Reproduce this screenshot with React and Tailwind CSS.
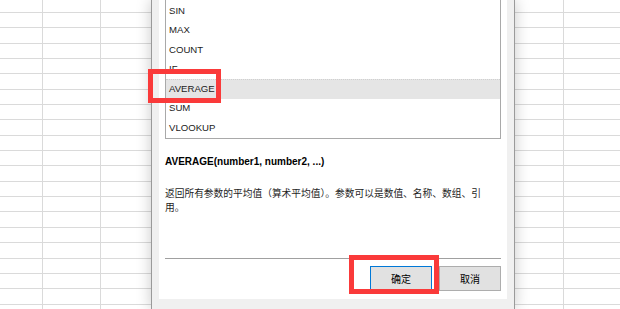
import React from 'react';

const funcs = ['SIN', 'MAX', 'COUNT', 'IF', 'AVERAGE', 'SUM', 'VLOOKUP'];
const rows = Array.from({ length: 20 }, (_, i) => i);

// Grille du tableur (gauche / droite de la boîte de dialogue)
const Sheet = ({ cols, className }) => (
  <div className={`bg-white flex flex-col overflow-hidden ${className}`}>
    <div className="h-[13px] shrink-0 border-b border-[#dadada] flex">
      {cols.map((c, i) => (
        <div key={i} className={`${c} h-full ${i < cols.length - 1 ? 'border-r border-[#dadada]' : ''}`} />
      ))}
    </div>
    {rows.map(r => (
      <div key={r} className="h-[15.35px] shrink-0 border-b border-[#dadada] flex">
        {cols.map((c, i) => (
          <div key={i} className={`${c} h-full ${i < cols.length - 1 ? 'border-r border-[#dadada]' : ''}`} />
        ))}
      </div>
    ))}
  </div>
);

export default function App() {
  return (
    <div className="relative w-[620px] h-[309px] overflow-hidden flex bg-white font-['Liberation_Sans','Noto_Sans_CJK_SC',sans-serif]">
      <Sheet cols={['w-[43px] shrink-0', 'w-[58px] shrink-0', 'flex-1']} className="w-[151px] shrink-0" />

      {/* Boîte de dialogue */}
      <div className="relative z-10 w-[364px] shrink-0 h-full border-x border-[#9a9a9a] bg-[#f0f0f0] pl-[7px] pr-[7px] pb-[10px] shadow-[0_0_14px_rgba(0,0,0,0.22)]">
        <div className="h-full bg-white flex flex-col px-[6px]">
          {/* Liste des fonctions */}
          <div className="pt-[1px] border-x border-b border-[#a9a9a9] flex flex-col">
            {funcs.map(f => (
              <div
                key={f}
                className={`h-[19.5px] flex items-center pl-[3px] text-[9.6px] text-[#222] ${f === 'AVERAGE' ? 'bg-[#e5e5e5] border-t border-dotted border-[#d0d0d0]' : ''}`}
              >
                {f}
              </div>
            ))}
          </div>

          <div className="mt-[17px] h-[12px] leading-[12px] text-[10px] font-bold text-black whitespace-nowrap">
            AVERAGE(number1, number2, ...)
          </div>

          <div className="mt-[18px] text-[9.72px] leading-[14px] text-[#1e1e1e] font-['Noto_Sans_CJK_SC',sans-serif]">
            <div className="whitespace-nowrap">返回所有参数的平均值（算术平均值）。参数可以是数值、名称、数组、引</div>
            <div>用。</div>
          </div>

          <div className="mt-auto border-t border-[#a0a0a0]" />
          <div className="mt-[7px] mb-[8px] flex justify-end gap-[7px]">
            <button className="w-[62px] h-[25px] bg-[#e1e1e1] border border-[#0078d7] text-[10px] text-black font-['Noto_Sans_CJK_SC',sans-serif]">
              确定
            </button>
            <button className="w-[62px] h-[25px] bg-[#e1e1e1] border border-[#adadad] text-[10px] text-black font-['Noto_Sans_CJK_SC',sans-serif]">
              取消
            </button>
          </div>
        </div>
      </div>

      <Sheet cols={['w-[49px] shrink-0', 'flex-1']} className="flex-1" />

      {/* Cadres rouges */}
      <div className="absolute left-[148px] top-[69px] w-[73px] h-[34px] border-[5px] border-[#fa3a3a] z-20" />
      <div className="absolute left-[349px] top-[255px] w-[90px] h-[39px] border-[5px] border-[#fa3a3a] z-20" />
    </div>
  );
}
